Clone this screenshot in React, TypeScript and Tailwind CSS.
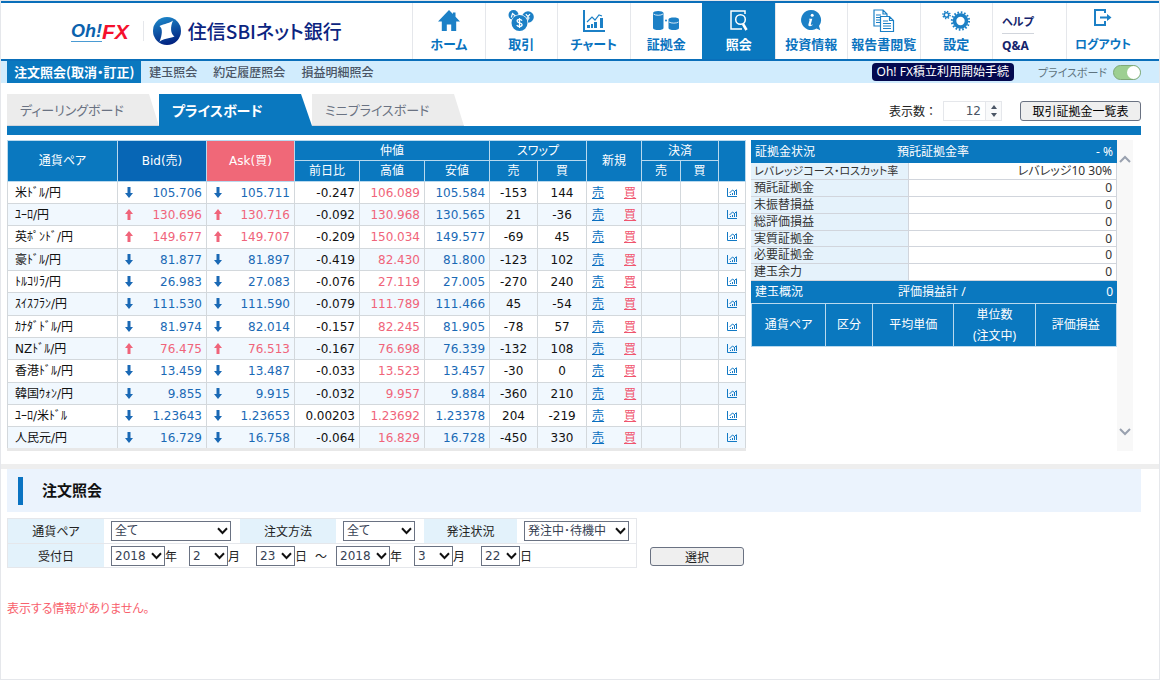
import { useState } from "react";
import type { ReactNode } from "react";

type Direction = "up" | "down";

interface Rate {
  pair: string;
  dir: Direction;
  bid: string;
  ask: string;
  change: string;
  high: string;
  low: string;
  swapSell: string;
  swapBuy: string;
}

const rates: Rate[] = [
  { pair: "米ﾄﾞﾙ/円", dir: "down", bid: "105.706", ask: "105.711", change: "-0.247", high: "106.089", low: "105.584", swapSell: "-153", swapBuy: "144" },
  { pair: "ﾕｰﾛ/円", dir: "up", bid: "130.696", ask: "130.716", change: "-0.092", high: "130.968", low: "130.565", swapSell: "21", swapBuy: "-36" },
  { pair: "英ﾎﾟﾝﾄﾞ/円", dir: "up", bid: "149.677", ask: "149.707", change: "-0.209", high: "150.034", low: "149.577", swapSell: "-69", swapBuy: "45" },
  { pair: "豪ﾄﾞﾙ/円", dir: "down", bid: "81.877", ask: "81.897", change: "-0.419", high: "82.430", low: "81.800", swapSell: "-123", swapBuy: "102" },
  { pair: "ﾄﾙｺﾘﾗ/円", dir: "down", bid: "26.983", ask: "27.083", change: "-0.076", high: "27.119", low: "27.005", swapSell: "-270", swapBuy: "240" },
  { pair: "ｽｲｽﾌﾗﾝ/円", dir: "down", bid: "111.530", ask: "111.590", change: "-0.079", high: "111.789", low: "111.466", swapSell: "45", swapBuy: "-54" },
  { pair: "ｶﾅﾀﾞﾄﾞﾙ/円", dir: "down", bid: "81.974", ask: "82.014", change: "-0.157", high: "82.245", low: "81.905", swapSell: "-78", swapBuy: "57" },
  { pair: "NZﾄﾞﾙ/円", dir: "up", bid: "76.475", ask: "76.513", change: "-0.167", high: "76.698", low: "76.339", swapSell: "-132", swapBuy: "108" },
  { pair: "香港ﾄﾞﾙ/円", dir: "down", bid: "13.459", ask: "13.487", change: "-0.033", high: "13.523", low: "13.457", swapSell: "-30", swapBuy: "0" },
  { pair: "韓国ｳｫﾝ/円", dir: "down", bid: "9.855", ask: "9.915", change: "-0.032", high: "9.957", low: "9.884", swapSell: "-360", swapBuy: "210" },
  { pair: "ﾕｰﾛ/米ﾄﾞﾙ", dir: "down", bid: "1.23643", ask: "1.23653", change: "0.00203", high: "1.23692", low: "1.23378", swapSell: "204", swapBuy: "-219" },
  { pair: "人民元/円", dir: "down", bid: "16.729", ask: "16.758", change: "-0.064", high: "16.829", low: "16.728", swapSell: "-450", swapBuy: "330" },
];

const margins = [
  ["レバレッジコース・ロスカット率", "レバレッジ10 30%"],
  ["預託証拠金", "0"],
  ["未振替損益", "0"],
  ["総評価損益", "0"],
  ["実質証拠金", "0"],
  ["必要証拠金", "0"],
  ["建玉余力", "0"],
];

/* ---------- icons ---------- */

const HomeIcon = () => (
  <svg width="24" height="24" viewBox="0 0 24 24" fill="#1c80c6">
    <path d="M12 1 1 12.500h3.800V22h5v-6.500h4.400V22h5v-9.500H23L18.500 7.800V3.500h-2.600v1.600z" />
  </svg>
);

const TradeIcon = () => (
  <svg width="26" height="24" viewBox="0 0 26 24" fill="#1c80c6">
    <circle cx="5.500" cy="6" r="5" />
    <circle cx="20" cy="8" r="5.800" />
    <path d="M3.300 8.500 4.500 4.500l3 2.500M17.800 5.200l2.200 2.300 2-2.300M20 7.500v3.700M18.300 9h3.400" fill="none" stroke="#fff" strokeWidth="1.200" />
    <circle cx="11.500" cy="14" r="8.700" fill="#fff" />
    <circle cx="11.500" cy="14" r="8" />
    <path d="M14 11.800c-.5-1-1.400-1.400-2.500-1.400-1.400 0-2.400.7-2.400 1.700 0 2.500 5 1.200 5 3.700 0 1.100-1.100 1.800-2.600 1.800-1.300 0-2.300-.5-2.700-1.500M11.500 9v10" fill="none" stroke="#fff" strokeWidth="1.300" />
  </svg>
);

const ChartIcon = () => (
  <svg width="22" height="24" viewBox="0 0 22 24" fill="#1c80c6">
    <path d="M0 1h2v20h20v2H0z" />
    <path d="M4 16h3v3H4zM8 15h2v4H8zM11 13h3v6h-3zM17 9h3v10h-3z" />
    <path d="m4 13 5-5 3 3 4-5 3 1" fill="none" stroke="#1c80c6" strokeWidth="1.200" />
  </svg>
);

const MarginIcon = () => (
  <svg width="26" height="24" viewBox="0 0 26 24" fill="#1c80c6">
    <path d="M0 4C0 1.300 10.500 1.300 10.500 4v15c0 2.800-10.500 2.800-10.500 0z" />
    <path d="M15.500 10.500c0-2.600 10.500-2.600 10.500 0v8.500c0 2.800-10.500 2.800-10.500 0z" />
    <path d="M.5 5c2 1.700 7.500 1.700 9.500 0M16 13c2 1.500 7.500 1.500 9.500 0" fill="none" stroke="#fff" strokeWidth=".8" />
    <circle cx="13" cy="11.500" r="1" />
  </svg>
);

const InquiryIcon = () => (
  <svg width="22" height="24" viewBox="0 0 22 24" fill="none" stroke="currentColor" strokeWidth="1.500">
    <path d="M17 5V2H3v18h11" />
    <circle cx="12.500" cy="10.500" r="4.800" />
    <path d="m15 15 3.500 6" strokeWidth="2.600" />
  </svg>
);

const InfoIcon = () => (
  <svg width="22" height="24" viewBox="0 0 22 24" fill="#1c80c6">
    <path d="M11 1a10 10 0 1 0 5.500 18.400l3.800 1.800-1.300-4.200A10 10 0 0 0 11 1z" />
    <circle cx="12.200" cy="6.200" r="1.500" fill="#fff" />
    <path d="M9 9.700h3.300l-1.500 5.600c-.2.900.5.800 1.600 0l.2.600c-2 1.800-4.700 1.800-4.200-.4l1.200-4.600c.1-.5-.1-.7-.7-.6z" fill="#fff" />
  </svg>
);

const ReportIcon = () => (
  <svg width="22" height="24" viewBox="0 0 22 24" fill="none" stroke="#1c80c6" strokeWidth="1.200">
    <path d="M7 17H1V1h9l4 4v2M10 1v4h4M3 6h5M3 8.500h4M3 11h4M3 13.500h4" />
    <path d="M7.500 7.500h9l4 4v11h-13zM16.500 7.500v4h4M10 12h5M10 14.500h8M10 17h8M10 19.500h8" />
  </svg>
);

const GearIcon = () => (
  <svg width="28" height="24" viewBox="0 0 28 24" fill="none" stroke="#1c80c6">
    <circle cx="4.500" cy="6" r="2.200" strokeWidth="1.500" />
    <circle cx="4.500" cy="6" r="3.600" strokeWidth="1.400" strokeDasharray="1.400 1.430" />
    <circle cx="18.500" cy="12" r="6" strokeWidth="3.600" />
    <circle cx="18.500" cy="12" r="8.600" strokeWidth="2.200" strokeDasharray="1.600 1.780" />
  </svg>
);

const LogoutIcon = () => (
  <svg width="20" height="24" viewBox="0 0 20 24" fill="none" stroke="#1c80c6" strokeWidth="2">
    <path d="M12 7V4H2v15h10v-4M7 11.500h8" />
    <path d="m14 8 4.500 3.500L14 15z" fill="#1c80c6" stroke="none" />
  </svg>
);

const BankMark = () => (
  <svg width="28" height="28" viewBox="0 0 28 28">
    <defs>
      <linearGradient id="mark" x1="0.300" y1="0" x2="0.600" y2="1">
        <stop offset="0" stopColor="#1c86c9" />
        <stop offset="1" stopColor="#001f7e" />
      </linearGradient>
    </defs>
    <circle cx="14" cy="14" r="14" fill="url(#mark)" />
    <path d="M20 3.500c-2 2.500-9 3.200-13.500 5.500 3.500 2.700 2.800 8.500 0 16 3-3.500 10-3.500 15-5.500-4-3-4.500-9-1.500-16z" fill="#fff" />
  </svg>
);

const RateArrow = ({ dir }: { dir: Direction }) => (
  <svg width="8" height="12" viewBox="0 0 8 12" fill="currentColor">
    {dir === "up" ? <path d="M2.500 11h3V5H8L4 0 0 5h2.500z" /> : <path d="M2.500 0h3v6H8l-4 5-4-5h2.500z" />}
  </svg>
);

const MiniChart = () => (
  <svg width="11" height="10" viewBox="0 0 11 10" fill="none" stroke="#1279c4">
    <path d="M.5 0v8.500H10M9.500 2v5M7.500 3v4M5.500 5v2M3.500 6v1" />
    <path d="m2.500 5 3-3 2 1.500 2-2" />
  </svg>
);

const Chevron = () => (
  <svg width="11" height="8" viewBox="0 0 11 8" fill="none" stroke="#111" strokeWidth="2">
    <path d="m1 1.300 4.500 4.700L10 1.300" />
  </svg>
);

/* ---------- header ---------- */

const navItems = [
  { label: "ホーム", icon: <HomeIcon /> },
  { label: "取引", icon: <TradeIcon /> },
  { label: "チャート", icon: <ChartIcon /> },
  { label: "証拠金", icon: <MarginIcon /> },
  { label: "照会", icon: <InquiryIcon />, active: true },
  { label: "投資情報", icon: <InfoIcon /> },
  { label: "報告書閲覧", icon: <ReportIcon /> },
  { label: "設定", icon: <GearIcon /> },
];

const Header = () => (
  <header className="flex h-[60px] border-y-2 border-[#0a6fba] bg-white">
    <div className="flex flex-1 items-center pl-[70px] whitespace-nowrap">
      <a href="#" className="flex items-end font-['Liberation_Sans',sans-serif] leading-5 font-bold italic">
        <span className="border-b border-[#4a9bd3] text-lg leading-5 text-[#0b62ad]">Oh!</span>
        <span className="text-[21px] text-[#f5102c]">FX</span>
      </a>
      <span className="ml-3.5 h-5 w-px bg-gray-200" />
      <a href="#" className="ml-[9px] flex items-center gap-[7px] text-[19px] leading-7 font-medium text-[#0b2480]">
        <BankMark />
        住信SBIネット銀行
      </a>
    </div>
    <nav className="flex shrink-0 text-[13px] leading-4 font-bold text-[#0a73bf]">
      <div className="grid w-[580px] grid-cols-8">
        {navItems.map((item) => (
          <a
            href="#"
            key={item.label}
            className={`flex flex-col items-center gap-[3px] border-l pt-1.5 whitespace-nowrap ${
              item.active ? "border-[#0a78bf] bg-[#0a78bf] text-white" : "border-gray-200"
            }`}
          >
            {item.icon}
            {item.label}
          </a>
        ))}
      </div>
      <div className="flex w-[74px] flex-col border-l border-gray-200 pt-2.5 pl-[9px] text-xs leading-4 text-[#15246c]">
        <a href="#" className="w-8 border-b border-gray-300 pb-1 text-[11px] whitespace-nowrap">ヘルプ</a>
        <a href="#" className="pt-1 font-['Noto_Sans',sans-serif]">Q&amp;A</a>
      </div>
      <a href="#" className="flex w-[93px] flex-col items-center gap-1.5 border-l border-gray-200 pt-[3px] pr-5 text-xs leading-4 whitespace-nowrap">
        <LogoutIcon />
        ログアウト
      </a>
    </nav>
  </header>
);

const SubNav = () => {
  const [boardOn, setBoardOn] = useState(true);

  return (
    <div className="flex h-[22px] items-center justify-between bg-[#d1ecfd] pr-[18px] pl-1.5 text-xs">
      <nav className="flex h-full items-center gap-4 font-medium text-gray-600">
        <a href="#" className="-mr-2 flex h-full items-center bg-[#0a78bf] px-[7px] text-[13px] font-bold text-white">
          注文照会(取消・訂正)
        </a>
        <a href="#">建玉照会</a>
        <a href="#">約定履歴照会</a>
        <a href="#">損益明細照会</a>
      </nav>
      <div className="flex items-center">
        <a href="#" className="rounded-sm bg-[#04094f] px-[5px] font-['Noto_Sans','Noto_Sans_CJK_JP',sans-serif] text-xs leading-[18px] text-white">
          Oh! FX積立利用開始手続
        </a>
        <label htmlFor="board" className="mr-1.5 ml-6 text-[11px] text-[#5f7480]">プライスボード</label>
        <span className="relative flex h-[15px] w-7">
          <input
            id="board"
            type="checkbox"
            checked={boardOn}
            onChange={() => setBoardOn(!boardOn)}
            className="peer h-[15px] w-7 appearance-none rounded-full border border-[#7fa878] bg-gray-300 checked:bg-[#9dcf92]"
          />
          <span className="pointer-events-none absolute top-px left-px h-[13px] w-[13px] rounded-full bg-white peer-checked:left-[14px]" />
        </span>
      </div>
    </div>
  );
};

const BoardTabs = () => (
  <div className="flex items-end justify-between border-b-9 border-[#0a78bf] pt-[11px]">
    <div className="flex text-[13px] text-gray-500">
      <button type="button" className="h-8 w-[152px] border-b border-gray-300 bg-[#ececec] pl-[13px] text-left [clip-path:polygon(0_0,142px_0,100%_100%,0_100%)]">
        ディーリングボード
      </button>
      <button type="button" className="h-8 w-[153px] bg-[#0a78bf] pl-[13px] text-left text-sm font-bold text-white [clip-path:polygon(0_0,142px_0,100%_100%,0_100%)]">
        プライスボード
      </button>
      <button type="button" className="h-8 w-[152px] border-b border-gray-300 bg-[#ececec] pl-[13px] text-left [clip-path:polygon(0_0,142px_0,100%_100%,0_100%)]">
        ミニプライスボード
      </button>
    </div>
    <div className="flex items-center pb-[5px] text-xs text-[#222]">
      <label htmlFor="count" className="[font-feature-settings:normal]">表示数：</label>
      <div className="mr-[18px] ml-1.5 flex h-5 w-[59px] border border-gray-200">
        <input id="count" defaultValue="12" className="w-full min-w-0 pr-1 text-right font-['DejaVu_Sans',sans-serif] text-xs text-gray-600" />
        <div className="flex w-4 shrink-0 flex-col items-center justify-center gap-1 border-l border-gray-200 bg-gray-50">
          <button type="button" aria-label="増やす">
            <svg width="6" height="4" viewBox="0 0 6 4" className="block fill-gray-600"><path d="M3 0 6 4H0z" /></svg>
          </button>
          <button type="button" aria-label="減らす">
            <svg width="6" height="4" viewBox="0 0 6 4" className="block fill-gray-600"><path d="m3 4 3-4H0z" /></svg>
          </button>
        </div>
      </div>
      <button type="button" className="h-5 w-[121px] rounded-[3px] border border-gray-500 bg-[#efefef] text-xs leading-4 text-black">
        取引証拠金一覧表
      </button>
    </div>
  </div>
);

/* ---------- price board ---------- */

const th = "border border-[#b9d9ee] font-normal";
const td = "border border-[#d3d8dc] py-0";

const PriceCell = ({ dir, value }: { dir: Direction; value: string }) => (
  <td className={`${td} pr-1 pl-[7px] ${dir === "up" ? "text-[#f0647a]" : "text-[#1a69b5]"}`}>
    <div className="flex items-center justify-between">
      <RateArrow dir={dir} />
      {value}
    </div>
  </td>
);

const PriceBoard = () => (
  <table className="w-[738px] shrink-0 table-fixed border-collapse border-b-3 border-[#e8e8e8] font-['DejaVu_Sans','Noto_Sans_CJK_JP',sans-serif] text-xs leading-4">
    <colgroup>
      <col className="w-[110px]" />
      <col className="w-[89px]" />
      <col className="w-[88px]" />
      <col className="w-[65px]" />
      <col className="w-[65px]" />
      <col className="w-[65px]" />
      <col className="w-[48px]" />
      <col className="w-[49px]" />
      <col className="w-[55px]" />
      <col className="w-[39px]" />
      <col className="w-[38px]" />
      <col className="w-[27px]" />
    </colgroup>
    <thead className="bg-[#0a78bf] text-white">
      <tr className="h-5">
        <th rowSpan={2} className={th}>通貨ペア</th>
        <th rowSpan={2} className={`${th} bg-[#0766b5]`}>Bid(売)</th>
        <th rowSpan={2} className={`${th} bg-[#f06878]`}>Ask(買)</th>
        <th colSpan={3} className={th}>仲値</th>
        <th colSpan={2} className={th}>スワップ</th>
        <th rowSpan={2} className={th}>新規</th>
        <th colSpan={2} className={th}>決済</th>
        <th rowSpan={2} className={th} />
      </tr>
      <tr className="h-[21px]">
        <th className={th}>前日比</th>
        <th className={th}>高値</th>
        <th className={th}>安値</th>
        <th className={th}>売</th>
        <th className={th}>買</th>
        <th className={th}>売</th>
        <th className={th}>買</th>
      </tr>
    </thead>
    <tbody className="text-[#111]">
      {rates.map((rate) => (
        <tr key={rate.pair} className="h-[22px] even:bg-[#f1f8fe] nth-[3n]:h-[23px]">
          <td className={`${td} pl-[7px] whitespace-nowrap`}>{rate.pair}</td>
          <PriceCell dir={rate.dir} value={rate.bid} />
          <PriceCell dir={rate.dir} value={rate.ask} />
          <td className={`${td} pr-1 text-right`}>{rate.change}</td>
          <td className={`${td} pr-1 text-right text-[#f0647a]`}>{rate.high}</td>
          <td className={`${td} pr-1 text-right text-[#1a69b5]`}>{rate.low}</td>
          <td className={`${td} text-center`}>{rate.swapSell}</td>
          <td className={`${td} text-center`}>{rate.swapBuy}</td>
          <td className={`${td} px-[5px]`}>
            <div className="flex justify-between underline">
              <a href="#" className="text-[#0a6fc0]">売</a>
              <a href="#" className="text-[#f0556e]">買</a>
            </div>
          </td>
          <td className={td} />
          <td className={td} />
          <td className={td}>
            <a href="#" aria-label="チャート" className="flex justify-center">
              <MiniChart />
            </a>
          </td>
        </tr>
      ))}
    </tbody>
  </table>
);

const MarginPanel = () => (
  <div className="flex min-w-0 flex-1 font-['Noto_Sans','Noto_Sans_CJK_JP',sans-serif] text-xs">
    <div className="flex-1 leading-4">
      <div className="flex h-[23px] items-center bg-[#0a78bf] px-1 text-white">
        <span className="w-[142px]">証拠金状況</span>
        <span className="flex-1">預託証拠金率</span>
        <span>- %</span>
      </div>
      <table className="w-full table-fixed border-collapse text-[#333]">
        <tbody>
          {margins.map(([label, value]) => (
            <tr key={label} className="h-[17px] border-b border-gray-300 first:text-[11px] nth-[4n+1]:h-4">
              <th className="w-[157px] border-r border-gray-300 bg-[#e5f2fb] p-0 pl-[3px] text-left leading-[15px] font-normal whitespace-nowrap">
                {label}
              </th>
              <td className="border-r border-gray-300 p-0 pr-1 text-right text-xs leading-[15px]">{value}</td>
            </tr>
          ))}
        </tbody>
      </table>
      <div className="flex h-[22px] items-center bg-[#0a78bf] px-1 text-white">
        <span className="w-[143px]">建玉概況</span>
        <span className="flex-1">評価損益計 /</span>
        <span>0</span>
      </div>
      <table className="w-full table-fixed border-collapse bg-[#0a78bf] text-white">
        <thead>
          <tr className="h-[43px]">
            <th className={`${th} w-[74px]`}>通貨ペア</th>
            <th className={`${th} w-[47px]`}>区分</th>
            <th className={th}>平均単価</th>
            <th className={`${th} p-0 leading-[21px]`}>
              単位数
              <br />
              (注文中)
            </th>
            <th className={th}>評価損益</th>
          </tr>
        </thead>
      </table>
    </div>
    <div className="flex w-4 flex-col items-center justify-between bg-[#f8f8f8] py-[15px] text-gray-400">
      <svg width="12" height="8" viewBox="0 0 12 8" fill="none" stroke="currentColor" strokeWidth="2"><path d="m1 7 5-5 5 5" /></svg>
      <svg width="12" height="8" viewBox="0 0 12 8" fill="none" stroke="currentColor" strokeWidth="2"><path d="m1 1 5 5 5-5" /></svg>
    </div>
  </div>
);

/* ---------- order inquiry ---------- */

interface SelectProps {
  label: string;
  value: string;
  width: string;
}

const Select = ({ label, value, width }: SelectProps) => (
  <span className={`relative inline-flex h-5 shrink-0 items-center ${width}`}>
    <select
      aria-label={label}
      className="h-full w-full appearance-none border border-gray-500 bg-white pl-[3px] font-['DejaVu_Sans','Noto_Sans_CJK_JP',sans-serif] text-xs leading-4 text-gray-700"
    >
      <option>{value}</option>
    </select>
    <span className="pointer-events-none absolute right-[3px]">
      <Chevron />
    </span>
  </span>
);

const FieldLabel = ({ children, width }: { children: ReactNode; width: string }) => (
  <div className={`flex shrink-0 items-center justify-center self-stretch bg-[#e3f2fb] ${width}`}>{children}</div>
);

const OrderInquiry = () => (
  <section className="pr-[18px] pl-1.5">
    <div className="flex h-[43px] items-center bg-[#ebf3fd] pl-[11px]">
      <span className="h-7 w-[5px] bg-[#0a73c2]" />
      <h2 className="pl-[19px] text-[15px] font-bold text-[#111]">注文照会</h2>
    </div>
    <form className="mt-1.5 flex items-end gap-[13px] text-xs text-[#222]" onSubmit={(e) => e.preventDefault()}>
      <div className="w-[630px] border border-gray-200">
        <div className="flex h-6 items-center">
          <FieldLabel width="w-24">通貨ペア</FieldLabel>
          <div className="flex w-[136px] pl-[7px]"><Select label="通貨ペア" value="全て" width="w-[120px]" /></div>
          <FieldLabel width="w-24">注文方法</FieldLabel>
          <div className="flex w-[88px] pl-[7px]"><Select label="注文方法" value="全て" width="w-[72px]" /></div>
          <FieldLabel width="w-[93px]">発注状況</FieldLabel>
          <div className="flex pl-[7px]"><Select label="発注状況" value="発注中･待機中" width="w-[105px]" /></div>
        </div>
        <div className="flex h-6 items-center border-t border-gray-200">
          <FieldLabel width="w-24">受付日</FieldLabel>
          <div className="flex items-center pl-[7px]">
            <Select label="開始年" value="2018" width="w-[54px]" />
            <span className="w-6">年</span>
            <Select label="開始月" value="2" width="w-[39px]" />
            <span className="w-7">月</span>
            <Select label="開始日" value="23" width="w-[39px]" />
            <span className="w-5">日</span>
            <span className="w-[21px]">～</span>
            <Select label="終了年" value="2018" width="w-[54px]" />
            <span className="w-6">年</span>
            <Select label="終了月" value="3" width="w-[39px]" />
            <span className="w-7">月</span>
            <Select label="終了日" value="22" width="w-[39px]" />
            <span>日</span>
          </div>
        </div>
      </div>
      <button type="submit" className="mb-0.5 h-[19px] w-[94px] rounded-[3px] border border-gray-500 bg-[#efefef] text-xs leading-4">
        選択
      </button>
    </form>
    <p className="mt-8 text-xs leading-4 text-[#f8616d]">表示する情報がありません。</p>
  </section>
);

export default function App() {
  return (
    <div className="min-h-screen border border-gray-200 bg-white font-['Noto_Sans_CJK_JP',sans-serif] [font-feature-settings:'palt']">
      <Header />
      <SubNav />
      <main>
        <div className="pr-[18px] pl-1.5">
          <BoardTabs />
          <div className="mt-[5px] mr-2 flex gap-[5px]">
            <PriceBoard />
            <MarginPanel />
          </div>
        </div>
        <div className="mt-[13px] h-[5px] bg-[#eeeeee]" />
        <OrderInquiry />
      </main>
    </div>
  );
}
